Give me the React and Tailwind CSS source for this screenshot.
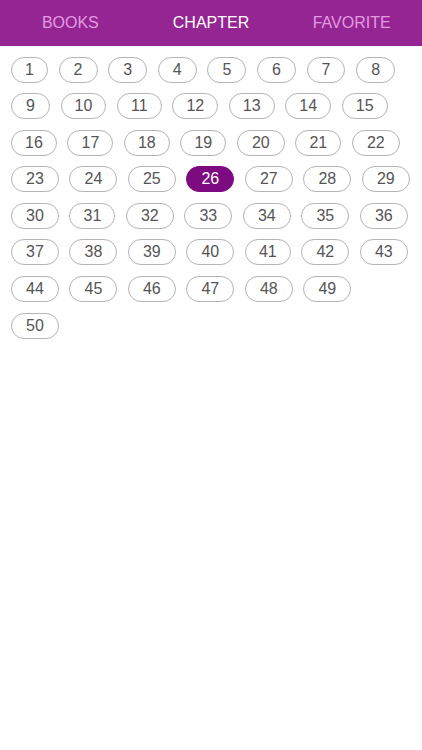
import React from "react";

const rows = [
  [1, 2, 3, 4, 5, 6, 7, 8],
  [9, 10, 11, 12, 13, 14, 15],
  [16, 17, 18, 19, 20, 21, 22],
  [23, 24, 25, 26, 27, 28, 29],
  [30, 31, 32, 33, 34, 35, 36],
  [37, 38, 39, 40, 41, 42, 43],
  [44, 45, 46, 47, 48, 49],
  [50],
];

function Pill({ n }) {
  const hasOne = String(n).includes("1");
  const pad = hasOne ? "px-[13px]" : "px-[14px]";
  if (n === 26) {
    return (
      <div className={`h-[26px] ${pad} rounded-full bg-[#7d0a80] border border-[#7d0a80] text-white text-[16px] flex items-center justify-center`}>
        {n}
      </div>
    );
  }
  return (
    <div className={`h-[26px] ${pad} rounded-full border border-[#b4b4b4] text-[#555555] text-[16px] flex items-center justify-center`}>
      {n}
    </div>
  );
}

export default function App() {
  return (
    <div className="w-[422px] h-[750px] bg-white" style={{ fontFamily: '"Liberation Sans", Arial, sans-serif' }}>
      <div className="h-[46px] bg-[#952593] grid grid-cols-3 items-center text-[16px]">
        <div className="text-center text-[#e29ae0]">BOOKS</div>
        <div className="text-center text-white">CHAPTER</div>
        <div className="text-center text-[#e29ae0]">FAVORITE</div>
      </div>
      <div className="flex flex-col gap-y-[10.6px] pl-[11px] pt-[10.5px]">
        {rows.map((r, i) => (
          <div key={i} className="flex gap-x-[10.7px]">
            {r.map((n) => (
              <Pill key={n} n={n} />
            ))}
          </div>
        ))}
      </div>
    </div>
  );
}
